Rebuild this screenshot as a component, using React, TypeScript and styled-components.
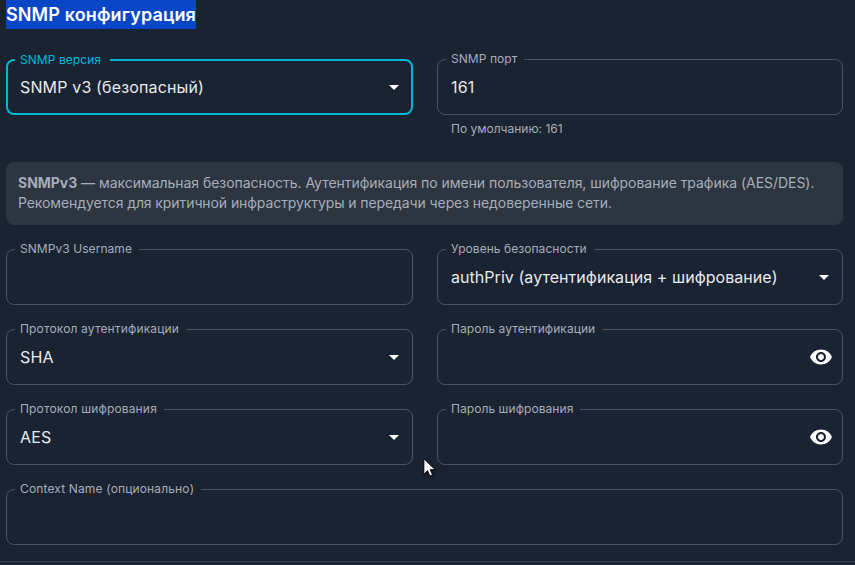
import React from "react";
import styled, { createGlobalStyle } from "styled-components";

const Global = createGlobalStyle`
  html, body { margin: 0; padding: 0; background: #1a2332; }
  body { width: 855px; height: 565px; overflow: hidden; font-family: Inter, "Noto Sans", sans-serif; }
`;

const Page = styled.div`
  position: relative;
  width: 855px;
  height: 565px;
  box-sizing: border-box;
  padding: 0 12px 0 6px;
  overflow: hidden;
  background: #1a2332;
`;

const Title = styled.h2`
  margin: 0 0 30px;
  width: fit-content;
  height: 29px;
  font-size: 18px;
  line-height: 29px;
  font-weight: 600;
  letter-spacing: 0.12px;
  color: #ffffff;
  background: #0747c7;
`;

const Grid = styled.div`
  display: grid;
  grid-template-columns: 407px 406px;
  column-gap: 24px;
  row-gap: 24px;
`;

const Wide = styled.div`
  grid-column: 1 / -1;
`;

const Box = styled.div<{ $focused?: boolean }>`
  position: relative;
  box-sizing: border-box;
  height: 56px;
  display: flex;
  align-items: center;
  justify-content: space-between;
  padding: 0 6px 0 13px;
  border-radius: 8px;
  border: ${(p) => (p.$focused ? "2px solid #00b8d4" : "1px solid #4a5260")};
  ${(p) => (p.$focused ? "padding-left: 12px; padding-right: 5px;" : "")}
`;

const Label = styled.label<{ $focused?: boolean; $gap?: number; $spacing?: number }>`
  position: absolute;
  top: -8px;
  left: ${(p) => (p.$focused ? "7px" : "8px")};
  padding: 0 ${(p) => p.$gap ?? 7}px 0 5px;
  background: #1a2332;
  font-size: 12px;
  line-height: 14px;
  letter-spacing: ${(p) => p.$spacing ?? 0.06}px;
  white-space: nowrap;
  color: ${(p) => (p.$focused ? "#00b8d4" : "#a6adb8")};
`;

const Value = styled.span<{ $spacing?: number }>`
  font-size: 16px;
  line-height: 24px;
  letter-spacing: ${(p) => p.$spacing ?? 0.15}px;
  color: #e8eaed;
  white-space: nowrap;
`;

const IconSvg = styled.svg`
  width: 24px;
  height: 24px;
  flex: none;
  fill: #ffffff;
`;

const EyeButton = styled(IconSvg)`
  margin-left: auto;
  margin-right: 3px;
`;

const Helper = styled.p`
  margin: 6px 0 0 14px;
  font-size: 12px;
  line-height: 15px;
  color: #a6adb8;
`;

const Info = styled.div`
  grid-column: 1 / -1;
  margin: 2px 0 0;
  padding: 11px 12px;
  height: 63px;
  box-sizing: border-box;
  border-radius: 8px;
  background: #2d3540;
  font-size: 14px;
  line-height: 20px;
  color: #a6adb8;
`;

const InfoLine = styled.span<{ $spacing: number }>`
  display: block;
  white-space: nowrap;
  letter-spacing: ${(p) => p.$spacing}px;
`;

const Strong = styled.strong`
  font-weight: 700;
`;

const Divider = styled.hr`
  margin: 16px -12px 0 -6px;
  border: 0;
  border-top: 1px solid #3a4250;
`;

const Cursor = styled.svg`
  position: absolute;
  left: 423px;
  top: 458px;
  width: 13px;
  height: 20px;
  filter: drop-shadow(1px 1px 1px rgba(0, 0, 0, 0.5));
`;

function Arrow() {
  return (
    <IconSvg viewBox="0 0 24 24">
      <path d="M7 10l5 5 5-5z" />
    </IconSvg>
  );
}

function Eye() {
  return (
    <EyeButton viewBox="0 0 24 24">
      <path d="M12 4.5C7 4.5 2.73 7.61 1 12c1.73 4.39 6 7.5 11 7.5s9.27-3.11 11-7.5c-1.73-4.39-6-7.5-11-7.5zM12 17c-2.76 0-5-2.24-5-5s2.24-5 5-5 5 2.24 5 5-2.24 5-5 5zm0-8c-1.66 0-3 1.34-3 3s1.34 3 3 3 3-1.34 3-3-1.34-3-3-3z" />
    </EyeButton>
  );
}

type FieldProps = {
  label: string;
  value?: string;
  select?: boolean;
  eye?: boolean;
  focused?: boolean;
  gap?: number;
  labelSpacing?: number;
  valueSpacing?: number;
};

function Field({ label, value, select, eye, focused, gap, labelSpacing, valueSpacing }: FieldProps) {
  return (
    <Box $focused={focused}>
      <Label $focused={focused} $gap={gap} $spacing={labelSpacing}>{label}</Label>
      {value && <Value $spacing={valueSpacing}>{value}</Value>}
      {select && <Arrow />}
      {eye && <Eye />}
    </Box>
  );
}

export default function App() {
  return (
    <Page>
      <Global />
      <Title>SNMP конфигурация</Title>
      <Grid>
        <Field label="SNMP версия" value="SNMP v3 (безопасный)" select focused gap={9} />
        <div>
          <Field label="SNMP порт" value="161" />
          <Helper>По умолчанию: 161</Helper>
        </div>
        <Info>
          <InfoLine $spacing={-0.04}>
            <Strong>SNMPv3</Strong> — максимальная безопасность. Аутентификация по имени пользователя, шифрование трафика (AES/DES).
          </InfoLine>
          <InfoLine $spacing={-0.09}>Рекомендуется для критичной инфраструктуры и передачи через недоверенные сети.</InfoLine>
        </Info>
        <Field label="SNMPv3 Username" />
        <Field label="Уровень безопасности" value="authPriv (аутентификация + шифрование)" select valueSpacing={0.05} />
        <Field label="Протокол аутентификации" labelSpacing={0.15} value="SHA" select />
        <Field label="Пароль аутентификации" eye />
        <Field label="Протокол шифрования" labelSpacing={0.16} value="AES" select />
        <Field label="Пароль шифрования" eye />
        <Wide>
          <Field label="Context Name (опционально)" labelSpacing={0.14} />
        </Wide>
      </Grid>
      <Divider />
      <Cursor viewBox="0 0 13 20">
        <path d="M1 1v15l3.6-3.4 2.4 5.2 2.4-1-2.4-5.2h4.9z" fill="#ffffff" stroke="#000000" strokeWidth="0.7" />
      </Cursor>
    </Page>
  );
}
